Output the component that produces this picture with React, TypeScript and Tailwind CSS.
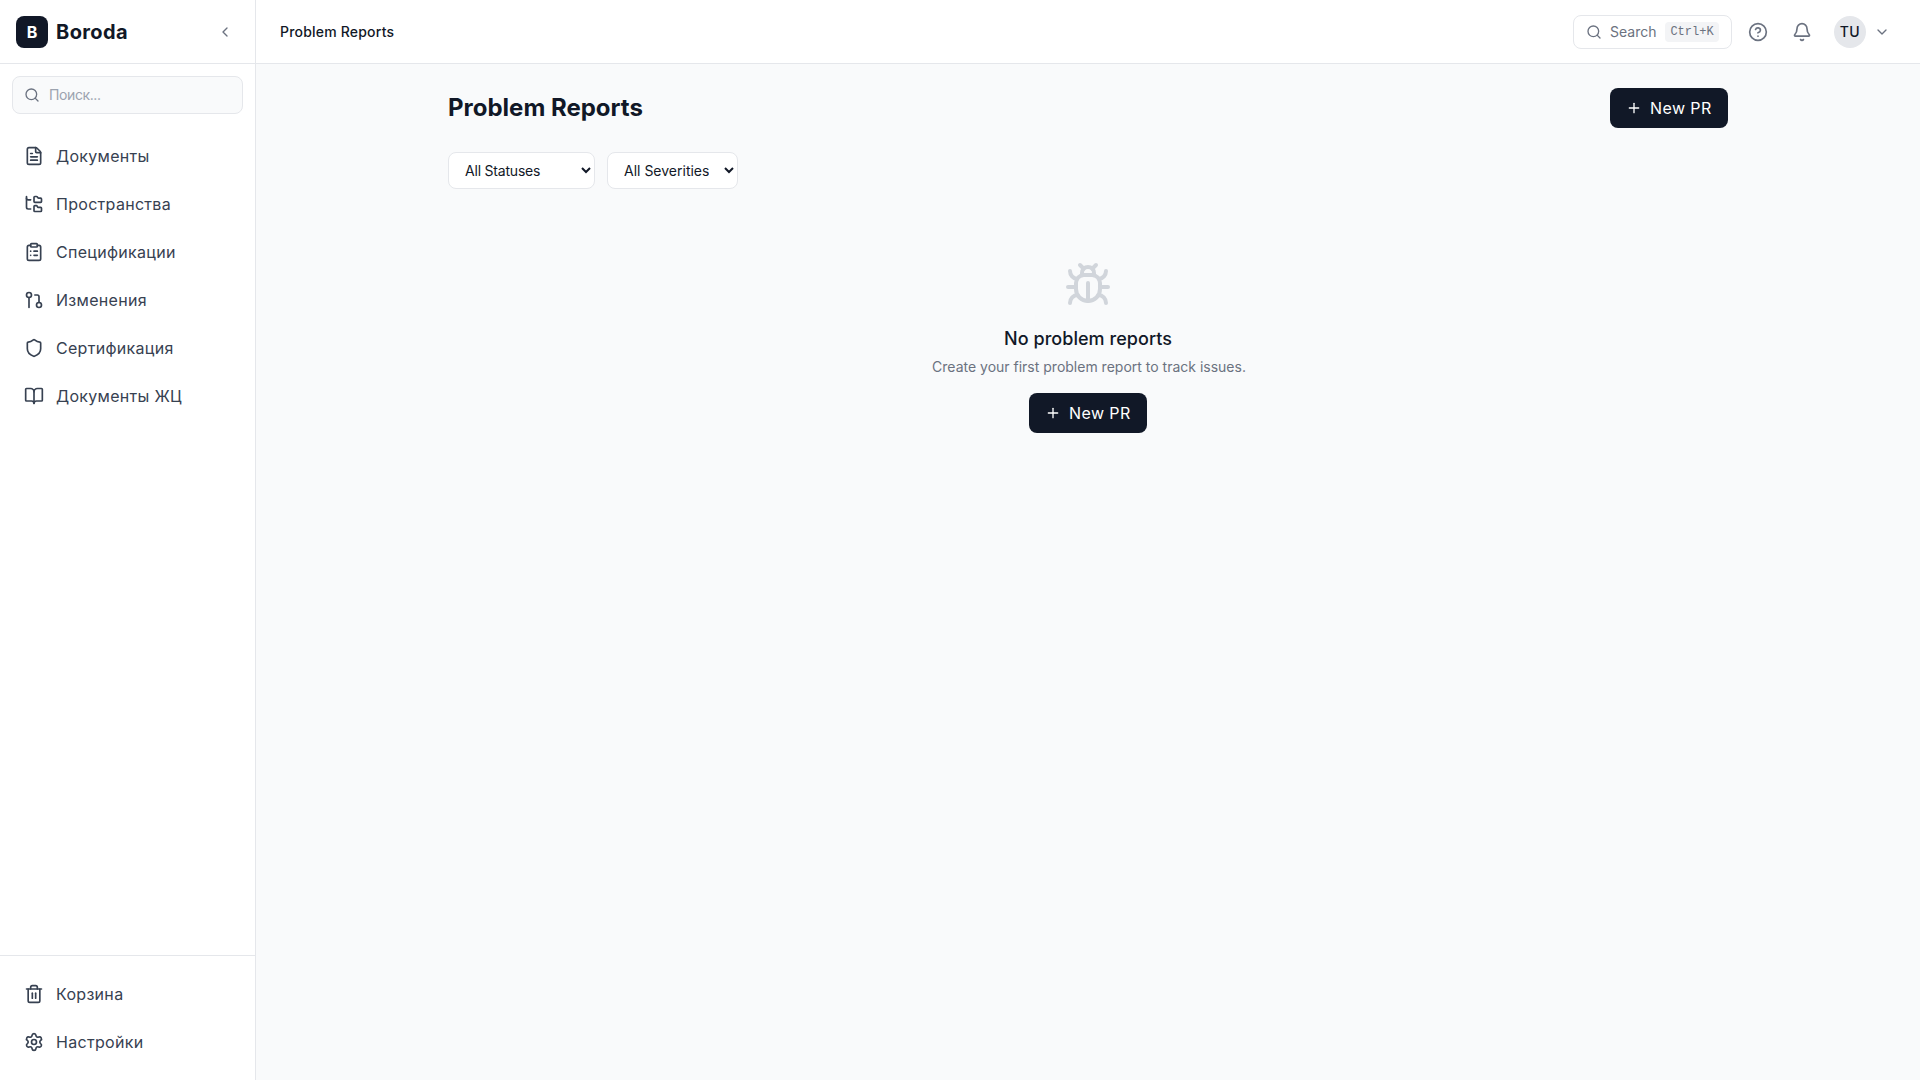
import React from "react";
import {
  Bell,
  BookOpen,
  Bug,
  ChevronDown,
  ChevronLeft,
  CircleHelp,
  ClipboardList,
  FileText,
  FolderTree,
  GitPullRequest,
  Plus,
  Search,
  Settings,
  Shield,
  Trash2,
} from "lucide-react";

const navItems = [
  { label: "Документы", icon: FileText },
  { label: "Пространства", icon: FolderTree },
  { label: "Спецификации", icon: ClipboardList },
  { label: "Изменения", icon: GitPullRequest },
  { label: "Сертификация", icon: Shield },
  { label: "Документы ЖЦ", icon: BookOpen },
];

const bottomItems = [
  { label: "Корзина", icon: Trash2 },
  { label: "Настройки", icon: Settings },
];

function NavItem({ label, icon: Icon }: { label: string; icon: React.ElementType }) {
  return (
    <a className="flex h-12 items-center gap-3 rounded-lg px-3 text-base tracking-[0.3px] text-[#374151]">
      <Icon size={20} strokeWidth={2} className="shrink-0 text-[#374151]" />
      <span>{label}</span>
    </a>
  );
}

function NewButton() {
  return (
    <button className="flex h-10 w-[118px] items-center gap-2 rounded-lg bg-[#111827] px-4 text-base tracking-[0.4px] text-white">
      <Plus size={16} />
      New PR
    </button>
  );
}

export default function App() {
  return (
    <div className="flex h-screen bg-[#f9fafb] font-['Inter',sans-serif] text-[#111827]">
      {/* Sidebar */}
      <aside className="flex w-64 shrink-0 flex-col border-r border-[#e5e7eb] bg-white">
        <div className="flex h-16 shrink-0 items-center justify-between border-b border-[#e5e7eb] pl-4 pr-[14px]">
          <div className="flex items-center gap-2">
            <div className="flex h-8 w-8 items-center justify-center rounded-lg bg-[#111827] text-base font-bold text-white">
              B
            </div>
            <span className="text-xl font-bold tracking-[0.4px] text-[#111827]">Boroda</span>
          </div>
          <button className="flex h-8 w-8 items-center justify-center text-[#6b7280]">
            <ChevronLeft size={16} />
          </button>
        </div>

        <div className="px-3 pt-3">
          <div className="flex h-[38px] items-center gap-[9px] rounded-lg border border-[#e5e7eb] bg-[#f9fafb] pl-[11px] pr-3">
            <Search size={16} className="text-[#6b7280]" />
            <span className="text-sm tracking-[-0.4px] text-[#9ca3af]">Поиск...</span>
          </div>
        </div>

        <nav className="flex-1 px-3 pt-[18px]">
          {navItems.map((item) => (
            <NavItem key={item.label} {...item} />
          ))}
        </nav>

        <div className="border-t border-[#e5e7eb] px-3 py-3.5">
          {bottomItems.map((item) => (
            <NavItem key={item.label} {...item} />
          ))}
        </div>
      </aside>

      <div className="flex min-w-0 flex-1 flex-col">
        {/* Header */}
        <header className="flex h-16 shrink-0 items-center justify-between border-b border-[#e5e7eb] bg-white pl-6 pr-[30px]">
          <span className="text-sm font-medium tracking-[0.2px] text-[#111827]">Problem Reports</span>
          <div className="flex items-center">
            <div className="flex h-[34px] w-[159px] items-center gap-2 rounded-lg border border-[#e5e7eb] bg-white px-3">
              <Search size={16} className="text-[#6b7280]" />
              <span className="text-sm text-[#6b7280]">Search</span>
              <kbd className="ml-auto w-[54px] rounded bg-[#f3f4f6] py-0.5 text-center font-['Liberation_Mono',monospace] text-xs text-[#6b7280]">
                Ctrl+K
              </kbd>
            </div>
            <button className="ml-4 text-[#6b7280]">
              <CircleHelp size={20} />
            </button>
            <button className="ml-6 text-[#6b7280]">
              <Bell size={20} />
            </button>
            <div className="ml-[22px] flex h-8 w-8 items-center justify-center rounded-full bg-[#e5e7eb] text-sm font-medium tracking-[0.5px]">
              TU
            </div>
            <ChevronDown size={16} className="ml-2 text-[#6b7280]" />
          </div>
        </header>

        {/* Main */}
        <main className="flex-1 overflow-auto">
          <div className="mx-auto max-w-[1280px] pt-6">
            <div className="flex items-center justify-between">
              <h1 className="text-2xl font-bold text-[#111827]">Problem Reports</h1>
              <NewButton />
            </div>

            <div className="mt-6 flex gap-3">
              <select className="h-[37px] w-[147px] rounded-lg border border-[#e5e7eb] bg-white px-3 text-sm tracking-[-0.2px]">
                <option>All Statuses</option>
              </select>
              <select className="h-[37px] w-[131px] rounded-lg border border-[#e5e7eb] bg-white px-3 text-sm">
                <option>All Severities</option>
              </select>
            </div>

            <div className="flex flex-col items-center pt-[72px]">
              <Bug size={48} className="text-[#d1d5db]" />
              <h3 className="mt-4 text-lg font-medium tracking-[0.05px] text-[#111827]">No problem reports</h3>
              <p className="mt-1 pl-0.5 text-sm text-[#6b7280]">Create your first problem report to track issues.</p>
              <div className="mt-4">
                <NewButton />
              </div>
            </div>
          </div>
        </main>
      </div>
    </div>
  );
}
